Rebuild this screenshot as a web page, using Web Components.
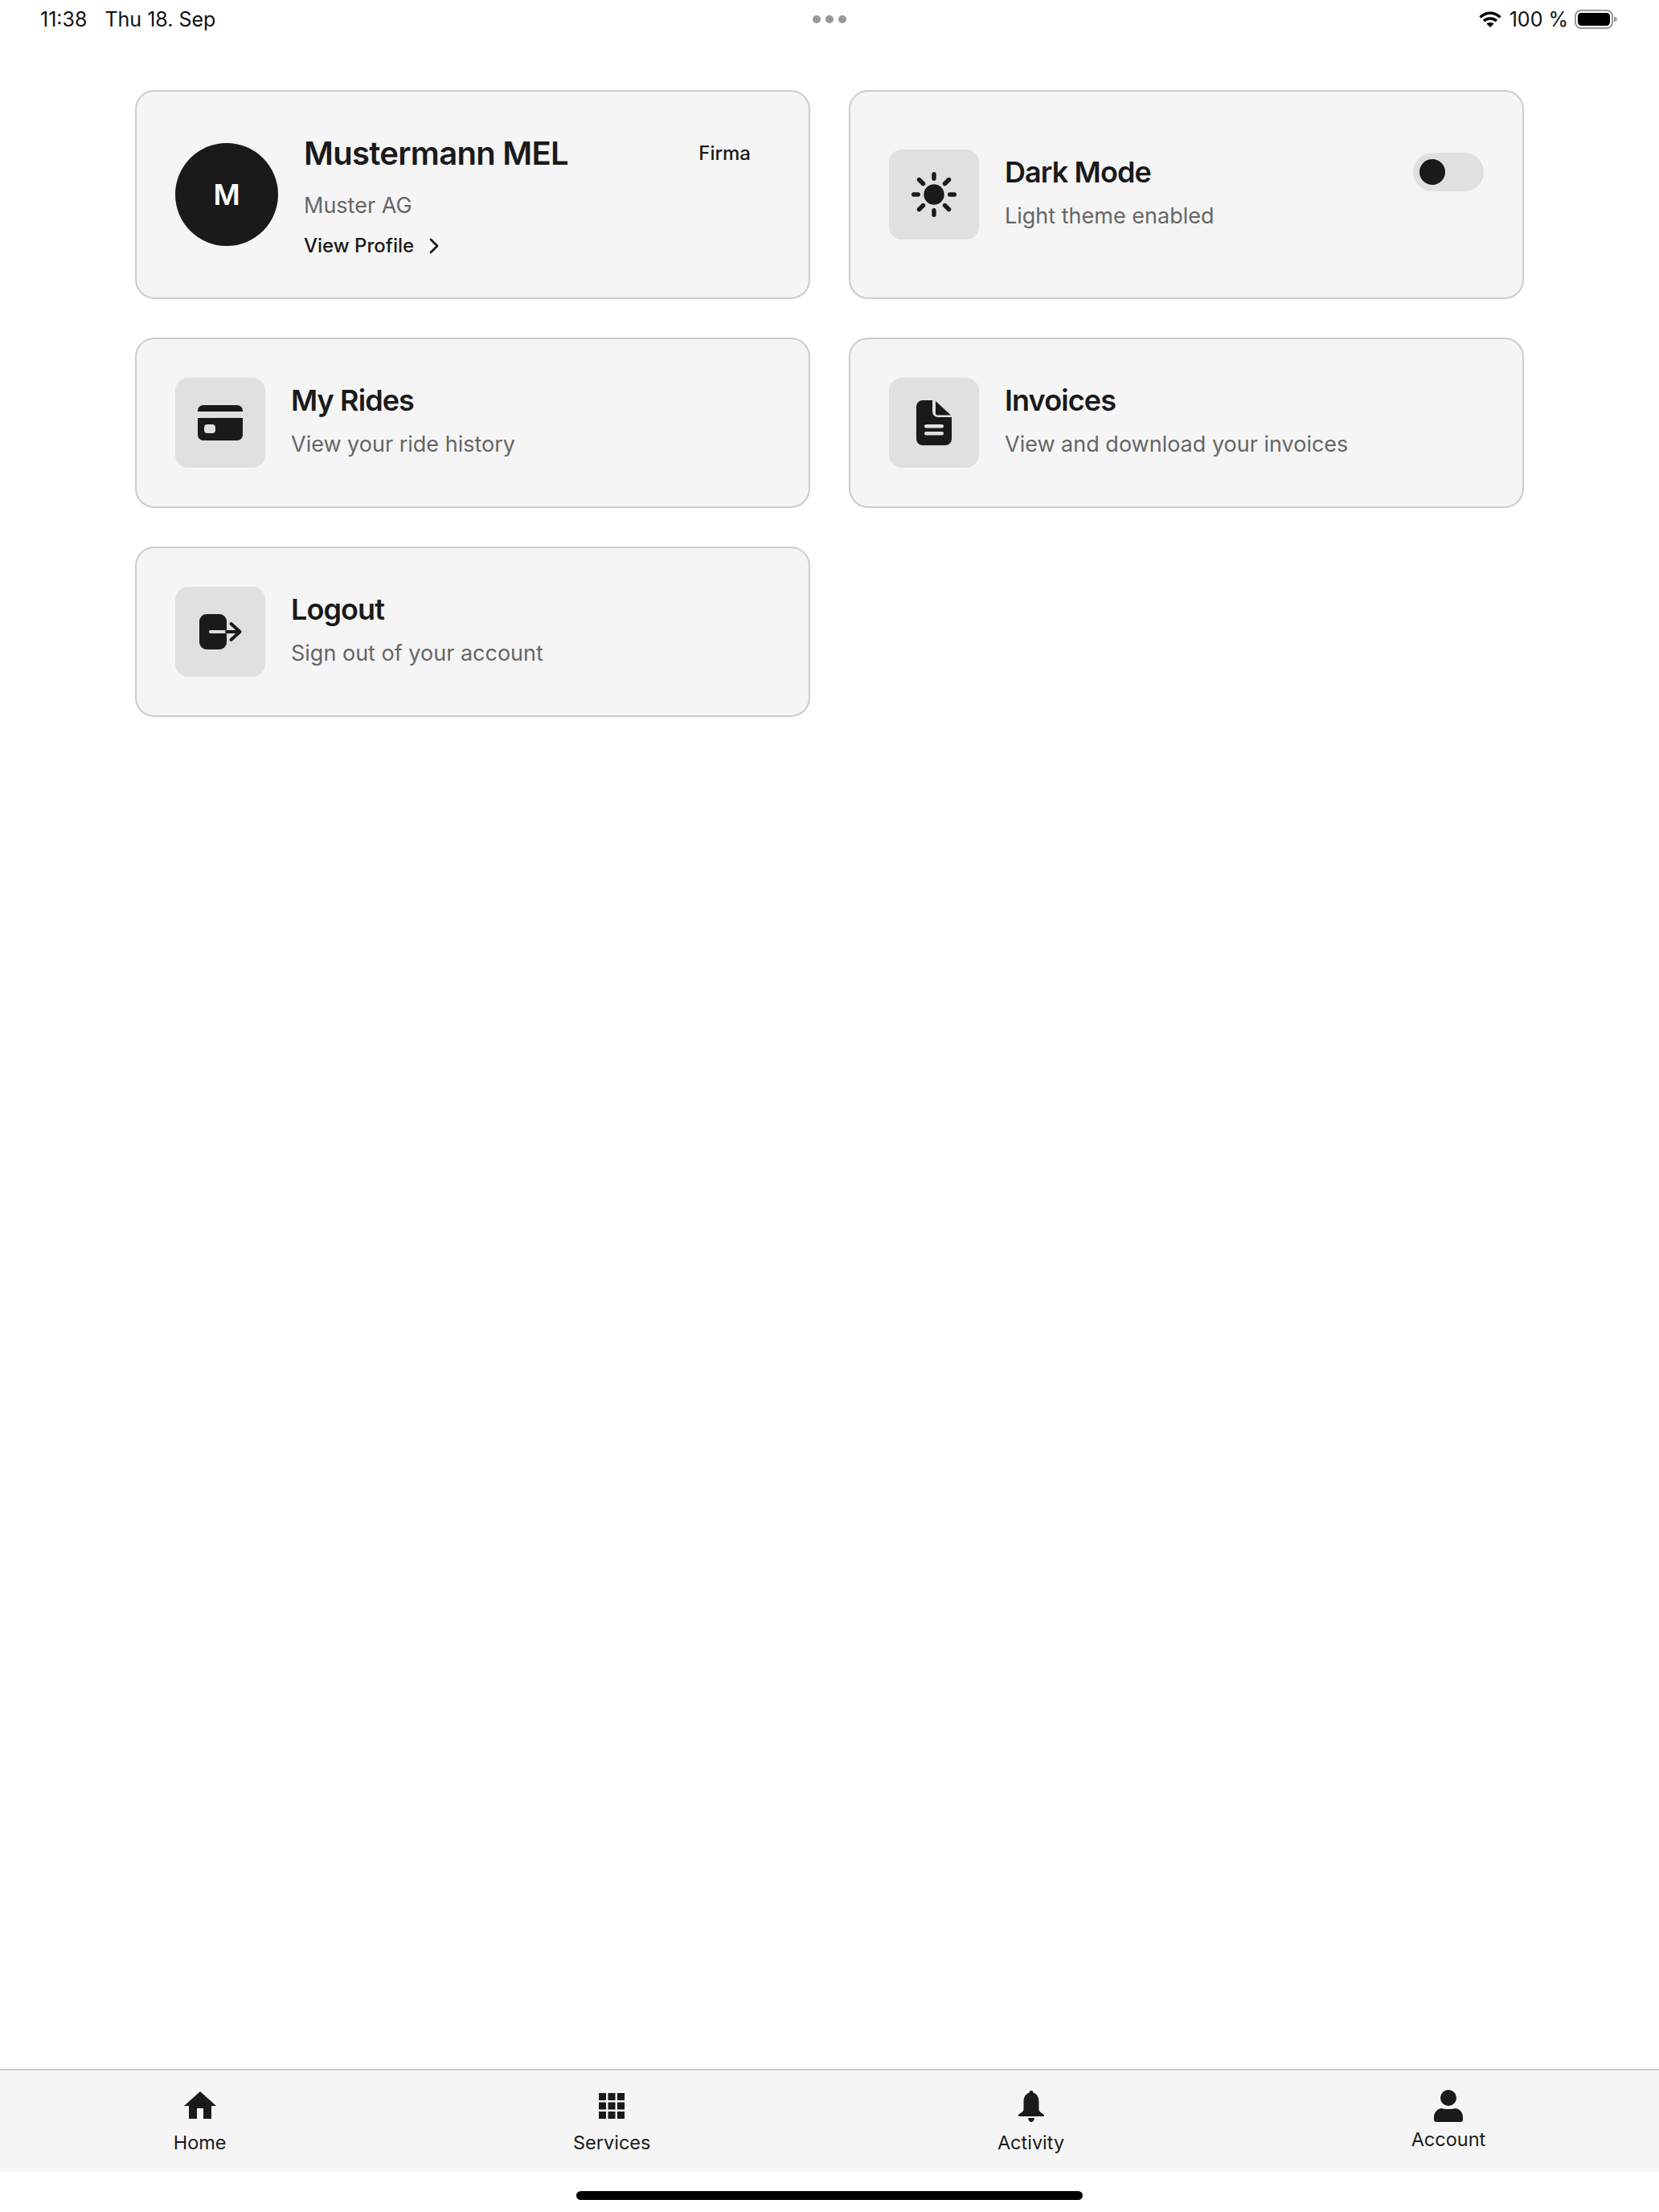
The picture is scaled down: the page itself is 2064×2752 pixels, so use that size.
<!DOCTYPE html>
<html>
  <head>
    <meta charset="UTF-8" />
    <title>Account</title>
    <style>
      html, body { margin: 0; padding: 0; background: #fff; }
      body { font-family: Inter, "Liberation Sans", sans-serif; color: #1a1a1a; }
      app-shell { height: 2752px; }
    </style>
  </head>
  <body>
    <app-shell>
      <status-bar></status-bar>
      <card-grid>
        <profile-card name="Mustermann MEL" company="Muster AG" tag="Firma" initial="M"></profile-card>
        <menu-card title="Dark Mode" sub="Light theme enabled">
          <svg slot="icon" viewBox="0 0 56 56" width="56" height="56" fill="#1a1a1a" stroke="#1a1a1a" stroke-width="5.4" stroke-linecap="round">
            <circle cx="28" cy="28" r="12.7" stroke="none" />
            <path d="M28 2.700V8.300M28 47.700V53.300M2.700 28H8.300M47.700 28H53.300M9.500 9.500L14.500 14.500M46.500 9.500L41.500 14.500M9.500 46.500L14.500 41.500M46.500 46.500L41.500 41.500" />
          </svg>
          <dark-toggle slot="action"></dark-toggle>
        </menu-card>
        <menu-card title="My Rides" sub="View your ride history">
          <svg slot="icon" viewBox="0 0 56 56" width="56" height="56" fill="#1a1a1a">
            <path d="M0 14V13a7 7 0 0 1 7-7H49a7 7 0 0 1 7 7V14Z" />
            <path d="M0 22H56V43a7 7 0 0 1-7 7H7a7 7 0 0 1-7-7ZM12 30a4 4 0 0 0-4 4v3a4 4 0 0 0 4 4h6a4 4 0 0 0 4-4v-3a4 4 0 0 0-4-4Z" fill-rule="evenodd" />
          </svg>
        </menu-card>
        <menu-card title="Invoices" sub="View and download your invoices">
          <svg slot="icon" viewBox="0 0 56 56" width="56" height="56" fill="#1a1a1a">
            <path d="M14 0H26V14a7 7 0 0 0 7 7H50V48a8 8 0 0 1-8 8H14a8 8 0 0 1-8-8V8a8 8 0 0 1 8-8Z" />
            <path d="M30 1 49 18.5H32a2 2 0 0 1-2-2Z" />
            <rect x="16" y="30" width="24" height="4.4" rx="2.2" fill="#e0e0e0" />
            <rect x="16" y="39" width="24" height="4.4" rx="2.2" fill="#e0e0e0" />
          </svg>
        </menu-card>
        <menu-card title="Logout" sub="Sign out of your account">
          <svg slot="icon" viewBox="0 0 56 56" width="56" height="56" fill="#1a1a1a">
            <rect x="2" y="6" width="34" height="44" rx="9" />
            <path d="M16 28H36" stroke="#e0e0e0" stroke-width="4" stroke-linecap="round" />
            <path d="M36 28H52M41.5 18 52.5 28 41.5 38" fill="none" stroke="#1a1a1a" stroke-width="4" stroke-linecap="round" stroke-linejoin="round" />
          </svg>
        </menu-card>
      </card-grid>
      <tab-bar>
        <tab-item label="Home">
          <svg viewBox="0 0 40 44" width="40" height="44" fill="#1a1a1a">
            <path d="M20 4 40 22H34V38H24V25H16V38H6V22H0Z" />
          </svg>
        </tab-item>
        <tab-item label="Services">
          <svg viewBox="0 0 32 44" width="32" height="44" fill="#1a1a1a">
            <rect x="0" y="6" width="9" height="9" /><rect x="11.5" y="6" width="9" height="9" /><rect x="23" y="6" width="9" height="9" />
            <rect x="0" y="17.5" width="9" height="9" /><rect x="11.5" y="17.5" width="9" height="9" /><rect x="23" y="17.5" width="9" height="9" />
            <rect x="0" y="29" width="9" height="9" /><rect x="11.5" y="29" width="9" height="9" /><rect x="23" y="29" width="9" height="9" />
          </svg>
        </tab-item>
        <tab-item label="Activity">
          <svg viewBox="0 0 32 44" width="32" height="44" fill="#1a1a1a">
            <path d="M16 3a2.4 2.4 0 0 1 2.4 2.6C23.500 7.500 25.500 11.500 25.500 17V26C25.500 29 28 30 32 33V35H0V33C4 30 6.500 29 6.500 26V17C6.500 11.500 8.500 7.500 13.600 5.600A2.400 2.400 0 0 1 16 3Z" />
            <path d="M12 37H20C19.500 40 18 42 16 42S12.500 40 12 37Z" />
          </svg>
        </tab-item>
        <tab-item label="Account" short>
          <svg viewBox="0 0 36 40" width="36" height="40" fill="#1a1a1a" style="margin:-2px 0">
            <ellipse cx="18" cy="10" rx="10" ry="10" />
            <path d="M9 23C11 23.500 14 24 18 24S25 23.500 27 23C32 24 36 28 36 34V37a3 3 0 0 1-3 3H3a3 3 0 0 1-3-3V34C0 28 4 24 9 23Z" />
          </svg>
        </tab-item>
      </tab-bar>
      <home-indicator></home-indicator>
    </app-shell>

    <script>
      class AppShell extends HTMLElement {
        constructor() {
          super();
          this.attachShadow({ mode: "open" }).innerHTML = `
            <style>
              :host { display: flex; flex-direction: column; width: 2064px; }
            </style>
            <slot></slot>`;
        }
      }

      class StatusBar extends HTMLElement {
        constructor() {
          super();
          this.attachShadow({ mode: "open" }).innerHTML = `
            <style>
              :host {
                display: grid; grid-template-columns: 1fr auto 1fr; align-items: center;
                height: 48px; padding: 0 50px; font-size: 25px; color: #111;
              }
              .left { display: flex; gap: 22px; }
              .dots { display: flex; gap: 6px; }
              .dots i { width: 10px; height: 10px; border-radius: 50%; background: #999; }
              .right { display: flex; align-items: center; justify-content: flex-end; padding-right: 2px; }
              .pct { margin: 0 8px 0 10px; }
            </style>
            <div class="left"><span>11:38</span><span>Thu 18. Sep</span></div>
            <div class="dots"><i></i><i></i><i></i></div>
            <div class="right">
              <svg viewBox="0 0 28 20" width="28" height="20" fill="none" stroke="#000" stroke-width="3.4">
                <path d="M1.500 7.500C9 .5 19 .5 26.500 7.500M6 12C10.500 8 17.500 8 22 12" />
                <path d="M14 20 9.500 15.500C12 13.500 16 13.500 18.500 15.500Z" fill="#000" stroke="none" />
              </svg>
              <span class="pct">100 %</span>
              <svg viewBox="0 0 53 24" width="53" height="24">
                <rect x="1" y="1" width="46" height="22" rx="7" fill="none" stroke="#999" stroke-width="2" />
                <rect x="4" y="4" width="40" height="16" rx="4.500" fill="#000" />
                <path d="M49 8.500C51.500 9.500 53 10.500 53 12S51.500 14.500 49 15.500Z" fill="#999" />
              </svg>
            </div>`;
        }
      }

      class CardGrid extends HTMLElement {
        constructor() {
          super();
          this.attachShadow({ mode: "open" }).innerHTML = `
            <style>
              :host {
                display: grid; grid-template-columns: 840px 840px; gap: 48px;
                align-items: stretch; align-content: start;
                flex: 1; padding: 64px 168px 0;
              }
            </style>
            <slot></slot>`;
        }
      }

      const cardCss = `
        :host {
          display: flex; align-items: center; gap: 32px; box-sizing: border-box;
          padding: 48px; background: #f5f5f5; border: 2px solid #ccc; border-radius: 24px;
        }
        .title { font-size: 36px; font-weight: 600; line-height: 36px; letter-spacing: -0.9px; }
        .sub { font-size: 27px; line-height: 40px; color: #666; }`;

      class MenuCard extends HTMLElement {
        constructor() {
          super();
          this.attachShadow({ mode: "open" }).innerHTML = `
            <style>
              ${cardCss}
              .icon {
                flex: none; width: 112px; height: 112px; border-radius: 16px; background: #e0e0e0;
                display: flex; align-items: center; justify-content: center;
              }
              .body { flex: 1; min-width: 0; }
              .head { display: flex; justify-content: space-between; align-items: center; height: 36px; margin-bottom: 17px; }
            </style>
            <div class="icon"><slot name="icon"></slot></div>
            <div class="body">
              <div class="head">
                <span class="title">${this.getAttribute("title")}</span>
                <slot name="action"></slot>
              </div>
              <div class="sub">${this.getAttribute("sub")}</div>
            </div>`;
        }
      }

      class ProfileCard extends HTMLElement {
        constructor() {
          super();
          this.attachShadow({ mode: "open" }).innerHTML = `
            <style>
              ${cardCss}
              .title { font-size: 40px; font-weight: 600; letter-spacing: -0.7px; }
              .avatar {
                flex: none; width: 128px; height: 128px; border-radius: 50%; background: #1a1a1a;
                color: #fff; font-size: 36px; font-weight: 600;
                display: flex; align-items: center; justify-content: center;
              }
              .body { flex: 1; min-width: 0; padding-right: 24px; }
              .head { display: flex; justify-content: space-between; align-items: center; height: 57px; margin-bottom: 17px; }
              .tag { font-size: 24px; font-weight: 500; }
              .link { display: flex; align-items: center; gap: 18px; margin-top: 14px; font-size: 24px; font-weight: 500; line-height: 32px; }
            </style>
            <div class="avatar">${this.getAttribute("initial")}</div>
            <div class="body">
              <div class="head">
                <span class="title">${this.getAttribute("name")}</span>
                <span class="tag">${this.getAttribute("tag")}</span>
              </div>
              <div class="sub">${this.getAttribute("company")}</div>
              <div class="link">
                <span>View Profile</span>
                <svg viewBox="0 0 14 20" width="14" height="20" fill="none" stroke="#1a1a1a" stroke-width="2.800" stroke-linecap="round" stroke-linejoin="round">
                  <path d="M3 2 11 10 3 18" />
                </svg>
              </div>
            </div>`;
        }
      }

      class DarkToggle extends HTMLElement {
        constructor() {
          super();
          this.attachShadow({ mode: "open" }).innerHTML = `
            <style>
              :host {
                display: flex; align-items: center; box-sizing: border-box; margin: -6px 0;
                width: 88px; height: 48px; padding: 0 8px; border-radius: 24px; background: #e0e0e0;
              }
              i { width: 32px; height: 32px; border-radius: 50%; background: #1a1a1a; }
            </style>
            <i></i>`;
        }
      }

      class TabBar extends HTMLElement {
        constructor() {
          super();
          this.attachShadow({ mode: "open" }).innerHTML = `
            <style>
              :host {
                display: flex; justify-content: space-around; align-items: center; box-sizing: border-box;
                height: 128px; padding-top: 1px; background: #f5f5f5; border-top: 2px solid #ccc;
              }
            </style>
            <slot></slot>`;
        }
      }

      class TabItem extends HTMLElement {
        constructor() {
          super();
          const short = this.hasAttribute("short");
          this.attachShadow({ mode: "open" }).innerHTML = `
            <style>
              :host { display: flex; flex-direction: column; align-items: center; font-size: 23.500px; color: #1a1a1a; }
              .ico { height: ${short ? 36 : 44}px; display: flex; align-items: center; }
              .label { line-height: 30px; margin-top: 9px; }
            </style>
            <div class="ico"><slot></slot></div>
            <div class="label">${this.getAttribute("label")}</div>`;
        }
      }

      class HomeIndicator extends HTMLElement {
        constructor() {
          super();
          this.attachShadow({ mode: "open" }).innerHTML = `
            <style>
              :host { display: flex; justify-content: center; align-items: flex-start; height: 50px; padding-top: 24px; box-sizing: border-box; }
              i { width: 630px; height: 11px; border-radius: 6px; background: #000; }
            </style>
            <i></i>`;
        }
      }

      customElements.define("app-shell", AppShell);
      customElements.define("status-bar", StatusBar);
      customElements.define("card-grid", CardGrid);
      customElements.define("menu-card", MenuCard);
      customElements.define("profile-card", ProfileCard);
      customElements.define("dark-toggle", DarkToggle);
      customElements.define("tab-bar", TabBar);
      customElements.define("tab-item", TabItem);
      customElements.define("home-indicator", HomeIndicator);
    </script>
  </body>
</html>
